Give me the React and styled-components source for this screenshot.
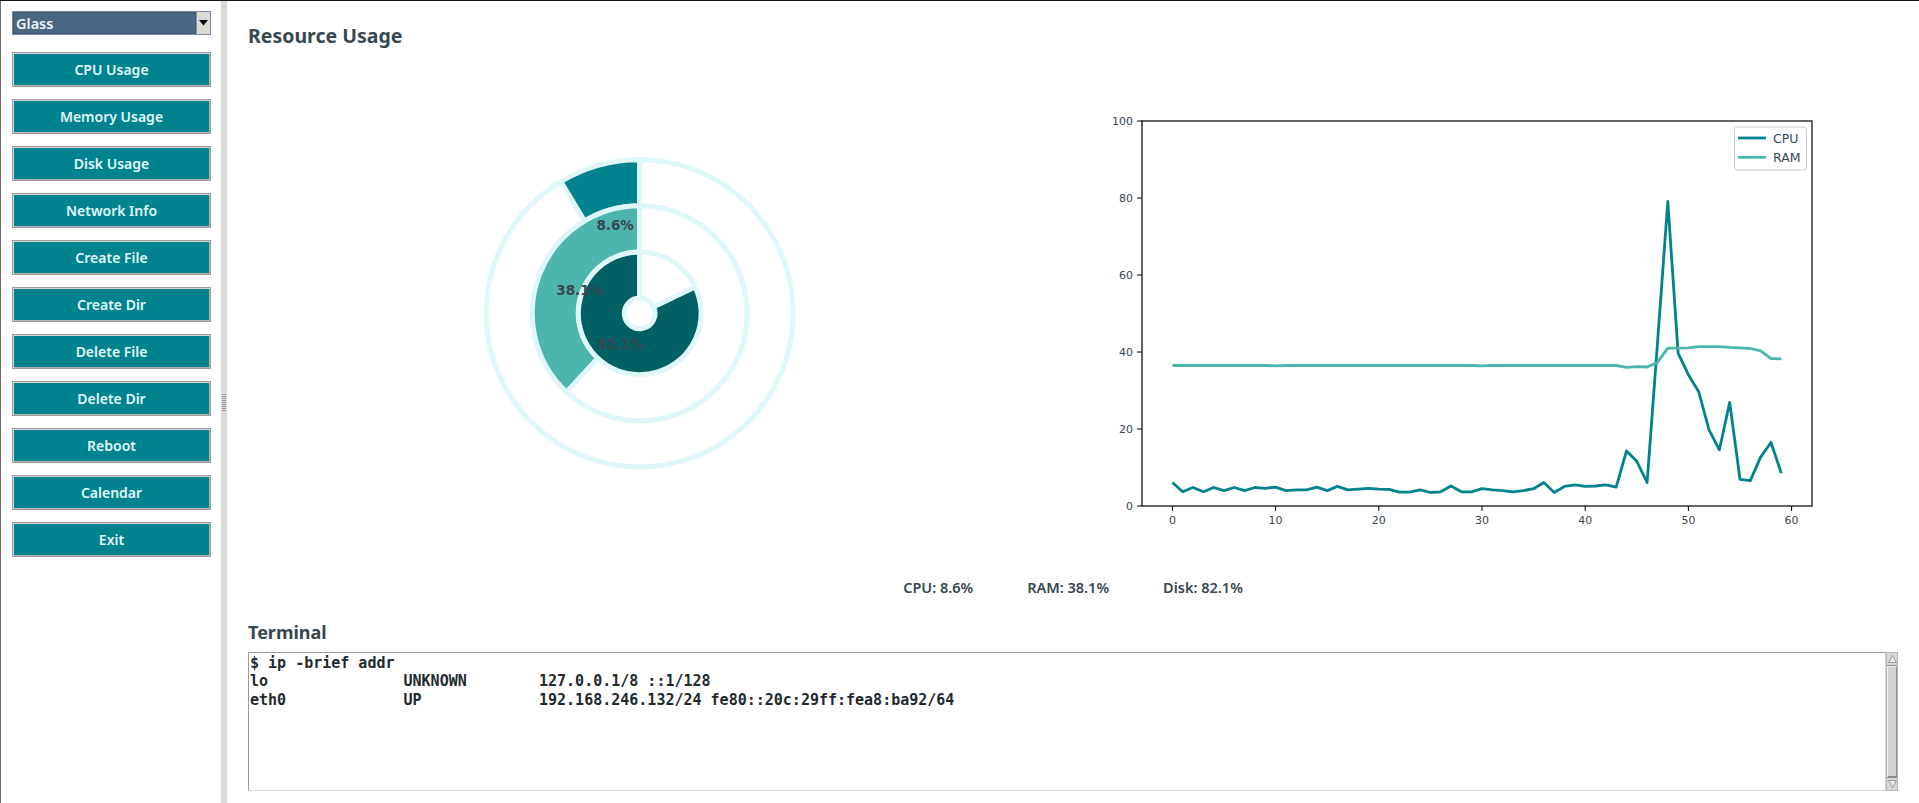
import React from 'react';
import styled, { createGlobalStyle } from 'styled-components';

const Global = createGlobalStyle`
  html, body { margin: 0; padding: 0; background: #ffffff; }
  body { overflow: hidden; }
  #root { width: 1919px; height: 803px; }
`;

const Window = styled.div`
  width: 1919px;
  height: 803px;
  box-sizing: border-box;
  border-top: 1px solid #141414;
  display: flex;
  background: #ffffff;
  font-family: "Noto Sans", "DejaVu Sans", sans-serif;
`;

const Sidebar = styled.aside`
  width: 221px;
  flex: none;
  box-sizing: border-box;
  border-left: 1px solid #6e6e6e;
  padding: 10px 0 0 11px;
  display: flex;
  flex-direction: column;
  gap: 12px;
`;

const Select = styled.div`
  width: 199px;
  height: 24px;
  box-sizing: border-box;
  display: flex;
  margin-bottom: 5px;
  border: 1px solid #7d8c9c;
`;

const SelectValue = styled.div`
  flex: 1;
  background: #4a6683;
  box-shadow: inset 0 0 0 1px #3e5873;
  color: #eef3f7;
  font-size: 14.5px;
  font-weight: 600;
  line-height: 22px;
  padding-left: 3px;
`;

const SelectArrow = styled.div`
  width: 13px;
  background: #dcdad5;
  border-left: 1px solid #8e9aa6;
  display: flex;
  align-items: center;
  justify-content: center;
`;

const NavButton = styled.button`
  width: 199px;
  height: 35px;
  box-sizing: border-box;
  background: #00838f;
  color: #e0f7fa;
  border: 1px solid #9c9c9c;
  box-shadow: inset 1px 1px 0 #d6d6d6, inset -1px -1px 0 #b4b4b4;
  font-family: "Noto Sans", sans-serif;
  font-size: 14px;
  font-weight: 600;
  padding: 0;
  cursor: pointer;
`;

const Sash = styled.div`
  width: 6px;
  flex: none;
  background: #dcdad5;
  display: flex;
  flex-direction: column;
  align-items: center;
  padding-top: 393px;
  box-sizing: border-box;
`;

const Grip = styled.div`
  width: 4px;
  height: 18px;
  background: repeating-linear-gradient(
    to bottom,
    #9d9a93 0px,
    #9d9a93 1px,
    transparent 1px,
    transparent 2px
  );
`;

const Main = styled.main`
  flex: 1;
  min-width: 0;
  padding: 0 21px;
  display: flex;
  flex-direction: column;
`;

const Title = styled.h1`
  margin: 22px 0 0;
  font-size: 19.5px;
  line-height: 26px;
  font-weight: 700;
  color: #37474f;
`;

const ChartsRow = styled.div`
  margin-top: 11px;
  height: 510px;
  display: flex;
`;

const ChartSvg = styled.svg`
  display: block;
  flex: none;
`;

const Stats = styled.div`
  height: 34px;
  display: flex;
  align-items: center;
  justify-content: center;
  gap: 54px;
  font-size: 14.5px;
  font-weight: 600;
  color: #37474f;
`;

const SectionTitle = styled.h2`
  margin: 16px 0 0;
  font-size: 18px;
  line-height: 24px;
  font-weight: 700;
  color: #37474f;
`;

const TerminalWrap = styled.div`
  margin-top: 8px;
  height: 139px;
  display: flex;
`;

const TerminalText = styled.pre`
  flex: 1;
  margin: 0;
  box-sizing: border-box;
  border: 1px solid;
  border-color: #9a9a9a #d6d6d6 #d6d6d6 #9a9a9a;
  padding: 1px 0 0 1px;
  font-family: "DejaVu Sans Mono", "Liberation Mono", monospace;
  font-size: 15px;
  font-weight: 700;
  line-height: 18.4px;
  color: #1e2a30;
  background: #ffffff;
  overflow: hidden;
`;

const Scrollbar = styled.div`
  width: 12px;
  flex: none;
  box-sizing: border-box;
  background: #d9d9d9;
  border: 1px solid #b5b5b5;
  display: flex;
  flex-direction: column;
`;

const ScrollArrow = styled.div`
  height: 12px;
  flex: none;
  display: flex;
  align-items: center;
  justify-content: center;
  background: #d9d9d9;
  border-bottom: ${(p) => (p.$down ? 'none' : '1px solid #8c8c8c')};
  border-top: ${(p) => (p.$down ? '1px solid #8c8c8c' : 'none')};
`;

const ScrollThumb = styled.div`
  flex: 1;
  background: #d4d4d4;
  box-shadow: inset 1px 1px 0 #f2f2f2, inset -1px -1px 0 #8c8c8c;
`;

/* ---------- Donut chart ---------- */
const CX = 639.7;
const CY = 313.3;
const R = 153.5;
const EDGE = '#e0f7fa';

function pt(r, a) {
  const t = (a * Math.PI) / 180;
  return [CX + r * Math.cos(t), CY - r * Math.sin(t)];
}

function wedge(r1, r0, a0, a1) {
  const large = a1 - a0 > 180 ? 1 : 0;
  const [x1, y1] = pt(r1, a0);
  const [x2, y2] = pt(r1, a1);
  const [x3, y3] = pt(r0, a1);
  const [x4, y4] = pt(r0, a0);
  return `M${x1} ${y1} A${r1} ${r1} 0 ${large} 0 ${x2} ${y2} L${x3} ${y3} A${r0} ${r0} 0 ${large} 1 ${x4} ${y4} Z`;
}

const rings = [
  { value: 8.6, radius: 1, color: '#00838f' },
  { value: 38.1, radius: 0.7, color: '#4db6ac' },
  { value: 82.1, radius: 0.4, color: '#006064' },
];

function Donut() {
  return (
    <ChartSvg width="812" height="510" viewBox="248 60 812 510">
      {rings.map((ring) => {
        const r1 = ring.radius * R;
        const r0 = r1 - 0.3 * R;
        const end = 90 + ring.value * 3.6;
        return (
          <g key={ring.value} stroke={EDGE} strokeWidth="5" strokeLinejoin="miter">
            <path d={wedge(r1, r0, 90, end)} fill={ring.color} />
            <path d={wedge(r1, r0, end, 450)} fill="#ffffff" />
          </g>
        );
      })}
      {rings.map((ring) => {
        const mid = 90 + ring.value * 1.8;
        const [x, y] = pt(0.6 * ring.radius * R, mid);
        return (
          <text
            key={'t' + ring.value}
            x={x}
            y={y}
            textAnchor="middle"
            dominantBaseline="central"
            fontFamily="'DejaVu Sans', sans-serif"
            fontWeight="700"
            fontSize="13.5"
            fill="#37474f"
          >
            {ring.value}%
          </text>
        );
      })}
    </ChartSvg>
  );
}

/* ---------- Line chart ---------- */
const cpu = [
  6.1, 3.7, 4.8, 3.7, 4.8, 4.0, 4.8, 4.0, 4.8, 4.6,
  4.9, 4.0, 4.2, 4.2, 4.9, 4.0, 5.1, 4.2, 4.4, 4.6,
  4.4, 4.3, 3.6, 3.6, 4.2, 3.5, 3.7, 5.2, 3.7, 3.7,
  4.5, 4.2, 4.0, 3.7, 4.0, 4.5, 6.1, 3.5, 5.1, 5.5,
  5.1, 5.2, 5.5, 4.9, 14.3, 11.6, 6.1, 42.0, 79.1, 39.7,
  34.1, 29.7, 19.8, 14.6, 26.9, 6.9, 6.6, 12.7, 16.5, 8.5,
];
const ram = [
  36.5, 36.5, 36.5, 36.5, 36.5, 36.5, 36.5, 36.5, 36.5, 36.5,
  36.4, 36.5, 36.5, 36.5, 36.5, 36.5, 36.5, 36.5, 36.5, 36.5,
  36.5, 36.5, 36.5, 36.5, 36.5, 36.5, 36.5, 36.5, 36.5, 36.5,
  36.4, 36.5, 36.5, 36.5, 36.5, 36.5, 36.5, 36.5, 36.5, 36.5,
  36.5, 36.5, 36.5, 36.5, 36.0, 36.2, 36.1, 37.3, 41.0, 41.0,
  41.1, 41.4, 41.4, 41.4, 41.2, 41.1, 40.9, 40.3, 38.3, 38.2,
];

const AX = { left: 1142, right: 1812, top: 121, bottom: 506 };
const xOf = (i) => 1172.4 + i * 10.32;
const yOf = (v) => AX.bottom - (v / 100) * (AX.bottom - AX.top);
const poly = (arr) => arr.map((v, i) => `${xOf(i).toFixed(1)},${yOf(v).toFixed(1)}`).join(' ');

const tickText = {
  fontFamily: "'DejaVu Sans', sans-serif",
  fontSize: 11,
  fill: '#37474f',
};

function LineChart() {
  const yTicks = [0, 20, 40, 60, 80, 100];
  const xTicks = [0, 10, 20, 30, 40, 50, 60];
  return (
    <ChartSvg width="838" height="510" viewBox="1060 60 838 510">
      <rect
        x={AX.left}
        y={AX.top}
        width={AX.right - AX.left}
        height={AX.bottom - AX.top}
        fill="#ffffff"
        stroke="#000"
        strokeWidth="1.2"
      />
      {yTicks.map((t) => (
        <g key={'y' + t}>
          <line x1={AX.left - 5} x2={AX.left} y1={yOf(t)} y2={yOf(t)} stroke="#000" strokeWidth="1" />
          <text x={AX.left - 9} y={yOf(t)} textAnchor="end" dominantBaseline="central" {...tickText}>
            {t}
          </text>
        </g>
      ))}
      {xTicks.map((t) => (
        <g key={'x' + t}>
          <line x1={xOf(t)} x2={xOf(t)} y1={AX.bottom} y2={AX.bottom + 5} stroke="#000" strokeWidth="1" />
          <text x={xOf(t)} y={AX.bottom + 14} textAnchor="middle" dominantBaseline="central" {...tickText}>
            {t}
          </text>
        </g>
      ))}
      <polyline points={poly(cpu)} fill="none" stroke="#00838f" strokeWidth="2.8" strokeLinejoin="round" />
      <polyline points={poly(ram)} fill="none" stroke="#4db6ac" strokeWidth="2.8" strokeLinejoin="round" />
      <rect x="1734.5" y="127" width="72" height="43" rx="3" fill="#ffffff" fillOpacity="0.8" stroke="#cccccc" strokeWidth="1" />
      <line x1="1738" x2="1766" y1="138" y2="138" stroke="#00838f" strokeWidth="2.8" />
      <line x1="1738" x2="1766" y1="157.3" y2="157.3" stroke="#4db6ac" strokeWidth="2.8" />
      <text x="1773" y="138" dominantBaseline="central" {...tickText} fontSize="12.5">CPU</text>
      <text x="1773" y="157.3" dominantBaseline="central" {...tickText} fontSize="12.5">RAM</text>
    </ChartSvg>
  );
}

const menu = [
  'CPU Usage',
  'Memory Usage',
  'Disk Usage',
  'Network Info',
  'Create File',
  'Create Dir',
  'Delete File',
  'Delete Dir',
  'Reboot',
  'Calendar',
  'Exit',
];

const terminalOutput = `$ ip -brief addr
lo               UNKNOWN        127.0.0.1/8 ::1/128
eth0             UP             192.168.246.132/24 fe80::20c:29ff:fea8:ba92/64`;

export default function App() {
  return (
    <>
      <Global />
      <Window>
        <Sidebar>
          <Select>
            <SelectValue>Glass</SelectValue>
            <SelectArrow>
              <svg width="9" height="6" viewBox="0 0 9 6">
                <path d="M0 0 H9 L4.5 5.5 Z" fill="#000" />
              </svg>
            </SelectArrow>
          </Select>
          {menu.map((m) => (
            <NavButton key={m}>{m}</NavButton>
          ))}
        </Sidebar>
        <Sash>
          <Grip />
        </Sash>
        <Main>
          <Title>Resource Usage</Title>
          <ChartsRow>
            <Donut />
            <LineChart />
          </ChartsRow>
          <Stats>
            <span>CPU: 8.6%</span>
            <span>RAM: 38.1%</span>
            <span>Disk: 82.1%</span>
          </Stats>
          <SectionTitle>Terminal</SectionTitle>
          <TerminalWrap>
            <TerminalText>{terminalOutput}</TerminalText>
            <Scrollbar>
              <ScrollArrow>
                <svg width="9" height="8" viewBox="0 0 9 8">
                  <path d="M4.5 0.5 L8.5 7.5 H0.5 Z" fill="#ececec" stroke="#9a9a9a" strokeWidth="1" />
                </svg>
              </ScrollArrow>
              <ScrollThumb />
              <ScrollArrow $down>
                <svg width="9" height="8" viewBox="0 0 9 8">
                  <path d="M0.5 0.5 H8.5 L4.5 7.5 Z" fill="#ececec" stroke="#9a9a9a" strokeWidth="1" />
                </svg>
              </ScrollArrow>
            </Scrollbar>
          </TerminalWrap>
        </Main>
      </Window>
    </>
  );
}
